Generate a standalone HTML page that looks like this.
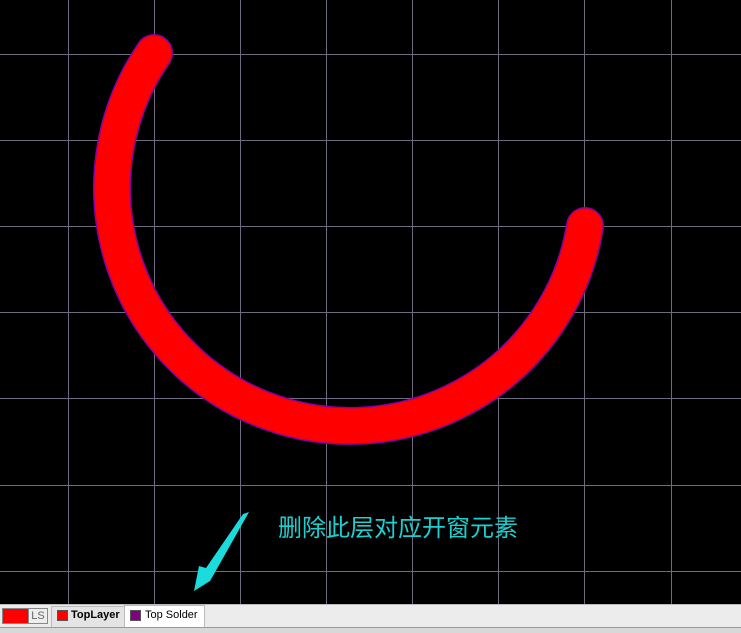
<!DOCTYPE html>
<html><head><style>
body{margin:0;width:741px;height:632px;background:#000;overflow:hidden;position:relative;font-family:"Liberation Sans",sans-serif}
.bar{position:absolute;left:0;top:604px;width:741px;height:28px;background:#ececec;border-top:1px solid #bbb}
</style></head><body>
<svg width="741" height="604" style="position:absolute;left:0;top:0">
<g stroke="#6e6a80" stroke-width="1">
<line x1="68.5" y1="0" x2="68.5" y2="604"/><line x1="154.5" y1="0" x2="154.5" y2="604"/>
<line x1="240.5" y1="0" x2="240.5" y2="604"/><line x1="326.5" y1="0" x2="326.5" y2="604"/>
<line x1="412.5" y1="0" x2="412.5" y2="604"/><line x1="498.5" y1="0" x2="498.5" y2="604"/>
<line x1="584.5" y1="0" x2="584.5" y2="604"/><line x1="671.5" y1="0" x2="671.5" y2="604"/>
<line x1="0" y1="54.5" x2="741" y2="54.5"/><line x1="0" y1="140.5" x2="741" y2="140.5"/>
<line x1="0" y1="226.5" x2="741" y2="226.5"/><line x1="0" y1="312.5" x2="741" y2="312.5"/>
<line x1="0" y1="398.5" x2="741" y2="398.5"/><line x1="0" y1="485.5" x2="741" y2="485.5"/>
<line x1="0" y1="571.5" x2="741" y2="571.5"/>
</g>
<path d="M154 53 A238 238 0 1 0 585 226" fill="none" stroke="#8a00a0" stroke-width="38" stroke-linecap="round"/>
<path d="M154 53 A238 238 0 1 0 585 226" fill="none" stroke="#ff0000" stroke-width="35" stroke-linecap="round"/>
<polygon points="249,512 243,514 206,568 199,566 194,591 210,581 214,574" fill="#1adcdc"/>
<text x="278" y="536" fill="#1ad0d0" font-size="24" font-family="'Noto Sans CJK SC',sans-serif">删除此层对应开窗元素</text>
</svg>
<div class="bar">
<div style="position:absolute;left:2px;top:3px;width:25px;height:14px;background:#f00;border:1px solid #888"></div>
<div style="position:absolute;left:28px;top:3px;width:18px;height:14px;background:#eee;border:1px solid #888;font-size:11px;color:#666;text-align:center;line-height:14px">LS</div>
<div style="position:absolute;left:51px;top:1px;width:72px;height:20px;background:#e4e4e4;border:1px solid #bbb"></div>
<div style="position:absolute;left:57px;top:5px;width:9px;height:9px;background:#f00;border:1px solid #555"></div>
<div style="position:absolute;left:71px;top:4px;font-size:11px;font-weight:bold;color:#000">TopLayer</div>
<div style="position:absolute;left:124px;top:0px;width:79px;height:21px;background:#fff;border:1px solid #bbb"></div>
<div style="position:absolute;left:130px;top:5px;width:9px;height:9px;background:#800080;border:1px solid #555"></div>
<div style="position:absolute;left:145px;top:4px;font-size:11px;color:#000">Top Solder</div>
<div style="position:absolute;left:0;top:22px;width:741px;height:1px;background:#999"></div>
<div style="position:absolute;left:0;top:23px;width:741px;height:5px;background:#d8d8d8"></div>
</div>
</body></html>
